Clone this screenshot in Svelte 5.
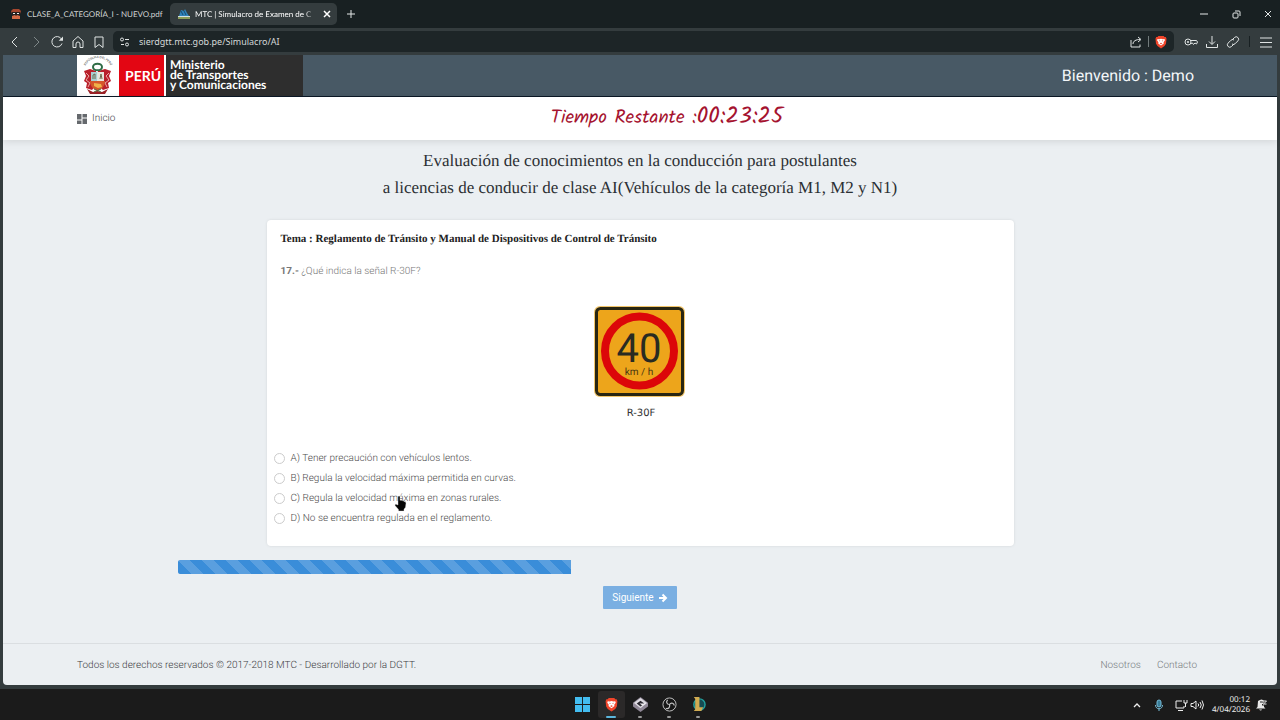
<script lang="ts">
	const options = [
		{ id: 'A', text: 'Tener precaución con vehículos lentos.' },
		{ id: 'B', text: 'Regula la velocidad máxima permitida en curvas.' },
		{ id: 'C', text: 'Regula la velocidad máxima en zonas rurales.' },
		{ id: 'D', text: 'No se encuentra regulada en el reglamento.' }
	];

	let selected = $state('');
	let url = $state('sierdgtt.mtc.gob.pe/Simulacro/AI');
	let current = 17;
	let total = 40;
	let progress = $derived((current / total) * 100);
</script>

{#snippet brave()}
	<svg viewBox="0 0 16 16">
		<path d="M5 1h6l1 1.400h1.500l.8 2-.6 5.600-1.700 2.700L8 15.500l-4-2.800L2.300 10l-.6-5.600.8-2H4z" fill="#f0452b" />
		<path d="M4 4.500l2 .3 2-.6 2 .6 2-.3.500 1.500-1.600 2.300.3 1.400L8 12 4.800 9.700l.3-1.400L3.500 6z" fill="#fff" />
		<path d="M5.200 6l2 .7-.7.8zM10.800 6l-2 .7.7.8zM6.500 9.500L8 8.800l1.500.7L8 10.600z" fill="#f0452b" />
	</svg>
{/snippet}

<div class="window">
	<div class="tabs">
		<div class="tab">
			<svg viewBox="0 0 12 12">
				<path d="M1 3l2-2h6l2 2-1 3H2z" fill="#a5472f" />
				<path d="M2 4h8v4H2z" fill="#26211f" />
				<path d="M3 5h2v1H3zM7 5h2v1H7z" fill="#eee" />
				<path d="M2 8l3-1 1 1 1-1 3 1v3H2z" fill="#d36a45" />
			</svg>
			<span>CLASE_A_CATEGORÍA_I - NUEVO.pdf</span>
		</div>
		<div class="tab active">
			<svg viewBox="0 0 12 12">
				<path d="M1 8L3 2l3 1 1-2 2 4 2 3z" fill="#2e82b8" />
				<path d="M3 3l2 4M6 3l2 4" stroke="#174a70" />
				<path d="M0 8h12v1H0z" fill="#d2dfe4" />
				<path d="M0 9h12v2H0z" fill="#8a9b58" />
			</svg>
			<span class="tab-title">MTC | Simulacro de Examen de C</span>
			<button aria-label="Cerrar pestaña">
				<svg viewBox="0 0 12 12" class="line"><path d="M3 3l6 6M9 3l-6 6" stroke-width="1.500" /></svg>
			</button>
		</div>
		<button aria-label="Nueva pestaña">
			<svg viewBox="0 0 12 12" class="line"><path d="M6 2v8M2 6h8" /></svg>
		</button>
		<div class="window-buttons">
			<button aria-label="Minimizar"><svg viewBox="0 0 12 12" class="line"><path d="M2 6h8" /></svg></button>
			<button aria-label="Restaurar">
				<svg viewBox="0 0 12 12" class="line"><rect x="3" y="5" width="5" height="5" rx="1" /><path d="M5 3h4q1 0 1 1v4" /></svg>
			</button>
			<button aria-label="Cerrar"><svg viewBox="0 0 12 12" class="line"><path d="M3 3l6 6M9 3l-6 6" /></svg></button>
		</div>
	</div>

	<div class="toolbar">
		<button aria-label="Atrás"><svg viewBox="0 0 14 14" class="line"><path d="M9 2L4 7l5 5" /></svg></button>
		<button aria-label="Adelante" class="dim"><svg viewBox="0 0 14 14" class="line"><path d="M5 2l5 5-5 5" /></svg></button>
		<button aria-label="Recargar">
			<svg viewBox="0 0 14 14" class="line"><path d="M12 8.500A5.200 5.200 0 1 1 11.500 4" /><path d="M13 1.500v4.300H8.700z" fill="currentColor" stroke="none" /></svg>
		</button>
		<button aria-label="Página principal">
			<svg viewBox="0 0 14 14" class="line"><path d="M2 6l5-4.500L12 6v6.500H9V9a2 2 0 0 0-4 0v3.500H2z" /></svg>
		</button>
		<button aria-label="Marcador"><svg viewBox="0 0 14 14" class="line"><path d="M3 2h8v10.500L7 9.500l-4 3z" /></svg></button>
		<div class="address">
			<svg viewBox="0 0 14 14" class="line"><circle cx="4" cy="4.500" r="1.500" /><path d="M7 4.500h4M3 9.500h3" /><circle cx="9" cy="9.500" r="1.500" /></svg>
			<input aria-label="Dirección" bind:value={url} />
			<button aria-label="Compartir">
				<svg viewBox="0 0 14 14" class="line"><path d="M2 5v7h9V9.500M4 9c0-3 3-4.500 7-4.500M9 2l3 2.500L9 7" /></svg>
			</button>
			<i></i>
			<button aria-label="Brave Shields">{@render brave()}</button>
		</div>
		<div class="tools">
			<button aria-label="Contraseñas">
				<svg viewBox="0 0 14 14" class="line"><circle cx="4" cy="7" r="3" /><circle cx="4" cy="7" r=".7" /><path d="M6.500 5.500h6l1 1.500-1 2-1.500-1-1.500 1.500-1-1.500-1.500.5" /></svg>
			</button>
			<button aria-label="Descargas">
				<svg viewBox="0 0 14 14" class="line"><path d="M7 1v8M4 6.500l3 3 3-3M1.500 9v3.500h11V9" /></svg>
			</button>
			<button aria-label="Copiar enlace">
				<svg viewBox="0 0 14 14" class="line"><path d="M6 5l2.500-2.500a2.400 2.400 0 0 1 3.400 3.400L9 8.800a2.400 2.400 0 0 1-3 .2M8 9l-2.500 2.500a2.400 2.400 0 0 1-3.400-3.400L5 5.200A2.400 2.400 0 0 1 8 5" /></svg>
			</button>
			<i></i>
			<button aria-label="Menú"><svg viewBox="0 0 14 14" class="line"><path d="M1 3h12M1 7.500h12M1 12h12" /></svg></button>
		</div>
	</div>

	<div class="page">
		<header>
			<div class="container">
				<a class="logo" href="#inicio">
					<svg viewBox="0 0 42 41">
						<defs><path id="arc" d="M7 17a14 14 0 0 1 28 0" /></defs>
						<text class="arc-text"><textPath href="#arc" startOffset="50%" text-anchor="middle">REPÚBLICA DEL PERÚ</textPath></text>
						<path d="M13 14l-6 2 2 5-2 5 3 2-1 5 6 2 4-5V16zM28 14l6 2-2 5 2 5-3 2 1 5-6 2-5-5V16z" fill="#b9202b" />
						<path d="M9 18l3 3-3 4 4 3-2 4M32 18l-3 3 3 4-4 3 2 4" stroke="#e9a9a4" fill="none" />
						<ellipse cx="20.500" cy="12" rx="4.500" ry="3.300" fill="#fff" stroke="#2e6b45" stroke-width="2" />
						<path d="M14 17h6.500v9H14z" fill="#a9cfd2" />
						<path d="M20.500 17H27v9h-6.500z" fill="#e7e6dc" />
						<path d="M16 24v-4l2-1v5M23 24l1-5 1 5" stroke="#6d6c4d" fill="none" />
						<path d="M13 26h15c0 5-3 8-7.500 10C16 34 13 31 13 26z" fill="#d5562b" />
						<path d="M17 28l7 1 1 3-4 1-4-2z" fill="#efb24a" />
						<path d="M10 34l6 3 4-1 5 1 6-3-3 5H13z" fill="#9c2026" />
						<path d="M17 34l7 3M24 34l-7 3" stroke="#557447" />
					</svg>
					<span class="peru">PERÚ</span>
					<span class="ministry">Ministerio<br />de Transportes<br />y Comunicaciones</span>
				</a>
				<span class="welcome">Bienvenido : Demo</span>
			</div>
		</header>

		<nav>
			<div class="container">
				<a class="home" href="#inicio">
					<svg viewBox="0 0 10 10"><path d="M0 0h4.500v5.500H0zM5.500 0H10v3.500H5.500zM0 6.500h4.500V10H0zM5.500 4.500H10V10H5.500z" fill="#65696d" /></svg>
					Inicio
				</a>
				<span class="timer">Tiempo Restante :<b>00:23:25</b></span>
			</div>
		</nav>

		<main>
			<h1>
				Evaluación de conocimientos en la conducción para postulantes<br />
				a licencias de conducir de clase AI(Vehículos de la categoría M1, M2 y N1)
			</h1>

			<section class="card">
				<h2>Tema : Reglamento de Tránsito y Manual de Dispositivos de Control de Tránsito</h2>
				<p class="question"><b>{current}.-</b> ¿Qué indica la señal R-30F?</p>

				<svg class="sign" viewBox="0 0 100 120" role="img" aria-label="Señal R-30F">
					<rect x="4" y="2" width="91" height="91" rx="6" fill="#f2c56a" />
					<rect x="6.500" y="4.500" width="86" height="86" rx="4" fill="#eda51b" stroke="#292612" stroke-width="3" />
					<circle cx="49.500" cy="47" r="34.500" fill="#eda51b" stroke="#dc0609" stroke-width="8" />
					<text x="49" y="58" font-size="40" fill="#292b22">40</text>
					<text x="49" y="71" font-size="10" fill="#4a3712">km / h</text>
					<text class="code" x="51" y="112" font-size="10" fill="#333">R-30F</text>
				</svg>

				<div class="options">
					{#each options as option}
						<label>
							<input type="radio" name="answer" value={option.id} bind:group={selected} />
							{option.id}) {option.text}
						</label>
					{/each}
					<svg class="pointer" viewBox="0 0 13 17">
						<path d="M4 1.500q1-1 2 0v4l1-.5 1 .8 1-.3 1 1 1.500.2.500 1.500-.5 4-1.500 2v1.800H4.500v-1.500L1 10.500l.5-1.500L4 10z" fill="#050505" stroke="#ddd" stroke-width=".4" />
					</svg>
				</div>
			</section>

			<div class="progress">
				<div class="bar" style="width: {progress}%"></div>
			</div>

			<button class="next">
				Siguiente
				<svg viewBox="0 0 10 10"><path d="M1 5h7M4.500 1.500L8 5 4.500 8.500" fill="none" stroke="#fff" stroke-width="2" /></svg>
			</button>
		</main>

		<footer>
			<div class="container">
				<span>Todos los derechos reservados © 2017-2018 MTC - Desarrollado por la DGTT.</span>
				<div class="links">
					<a href="#nosotros">Nosotros</a>
					<a href="#contacto">Contacto</a>
				</div>
			</div>
		</footer>
	</div>

	<div class="taskbar">
		<div class="apps">
			<button aria-label="Inicio de Windows">
				<svg viewBox="0 0 16 16"><path d="M0 0h7.500v7.500H0zM8.500 0H16v7.500H8.500zM0 8.500h7.500V16H0zM8.500 8.500H16V16H8.500z" fill="#43bdf0" /></svg>
			</button>
			<button aria-label="Brave" class="open current">{@render brave()}</button>
			<button aria-label="Editor" class="open">
				<svg viewBox="0 0 16 16"><path d="M8 0l8 6v4l-8 6-8-6V6z" fill="#8f8796" /><path d="M8 1l7 5.500L8 12 1 6.500z" fill="#dedbe2" /><path d="M4 7l4-3 4 3-4 3z" fill="#28252e" /><path d="M7 7h7l-4 2z" fill="#f3f1f5" /></svg>
			</button>
			<button aria-label="OBS Studio" class="open">
				<svg viewBox="0 0 16 16"><circle cx="8" cy="8" r="7" fill="#171717" stroke="#c5c5c5" /><path d="M8 8C5 8 4 5 6 3M8 8c2-3 5-1 5 1M8 8c1 3-1 5-4 4" stroke="#c5c5c5" stroke-width="1.300" fill="none" /></svg>
			</button>
			<button aria-label="League of Legends" class="open">
				<svg viewBox="0 0 16 16"><circle cx="9" cy="8" r="6" fill="#164c53" stroke="#23a2a0" stroke-width="1.500" /><path d="M3 0h6v11h4l-2 4H3l1.500-2V2z" fill="#d1ac52" /></svg>
			</button>
		</div>
		<div class="tray">
			<svg viewBox="0 0 14 14" class="line"><path d="M4 9l3-3 3 3" stroke-width="1.300" /></svg>
			<svg viewBox="0 0 14 14" class="line mic"><rect x="5" y="2" width="4" height="7" rx="2" fill="#397d99" /><path d="M3.500 7c0 5 7 5 7 0M7 11v2" /></svg>
			<div class="devices">
				<svg viewBox="0 0 14 14" class="line"><path d="M8 3H2v7h8V8M4 12.500h5M10 2v3h3V2M11.500 5v4" /></svg>
				<svg viewBox="0 0 14 14" class="line"><path d="M1 5.500h2L6 3v8L3 8.500H1zM8 5.500q1.500 1.500 0 3M10 4q2.500 3 0 6M12 2.500q3 4.500 0 9" /></svg>
			</div>
			<time>00:12<br />4/04/2026</time>
			<svg viewBox="0 0 14 14"><path d="M4 3q4-3 6 0v6l1.500 1.500H2L3.500 9zM5 11.500h3q-1 2-3 0z" fill="#e8e8e8" /><path d="M6 4h5L8 7h4" stroke="#222" fill="none" /><path d="M8.500 3h4L9.500 6h3" stroke="#e8e8e8" fill="none" /></svg>
		</div>
	</div>
</div>

<style>
	:global(body) {
		margin: 0;
	}

	.window {
		display: flex;
		flex-direction: column;
		min-height: 100vh;
		background-color: #343c3e;
		font-family: Roboto, 'Liberation Sans', sans-serif;
		font-size: 10px;
		text-rendering: geometricPrecision;
	}

	button {
		display: flex;
		align-items: center;
		padding: 0;
		background: none;
		border: none;
		color: inherit;
		cursor: pointer;
	}

	a {
		color: inherit;
		text-decoration: none;
	}

	svg {
		display: block;
		flex: none;
		width: 14px;
		height: 14px;
	}

	.line {
		fill: none;
		stroke: currentColor;
		stroke-width: 1;
	}

	/* browser chrome */
	.tabs {
		display: flex;
		align-items: center;
		gap: 8px;
		height: 28px;
		padding-right: 6px;
		background-color: #182022;
		color: #e4e8e8;
		font-family: Lato, sans-serif;
		font-size: 8px;
	}

	.tabs svg {
		width: 12px;
		height: 12px;
	}

	.tab {
		display: flex;
		flex: none;
		align-items: center;
		gap: 5px;
		box-sizing: border-box;
		width: 162px;
		padding-left: 10px;
		white-space: nowrap;
		color: #d0d4d4;
	}

	.tab.active {
		width: 167px;
		height: 22px;
		padding: 0 4px 0 8px;
		border-radius: 5px;
		background-color: #343c3e;
		color: #fff;
	}

	.tab-title {
		flex: 1;
		overflow: hidden;
		mask-image: linear-gradient(to right, #000 90%, transparent);
	}

	.window-buttons {
		display: flex;
		gap: 20px;
		margin-left: auto;
	}

	.toolbar {
		display: flex;
		align-items: center;
		gap: 7px;
		height: 27px;
		padding: 0 7px 0 8px;
		color: #e0e4e4;
	}

	.dim {
		color: #7f8889;
	}

	.address {
		display: flex;
		flex: 1;
		align-items: center;
		gap: 5px;
		height: 21px;
		padding: 0 6px 0 5px;
		border-radius: 5px;
		background-color: #1d2527;
	}

	.address input {
		flex: 1;
		padding: 0 0 0 2px;
		border: none;
		outline: none;
		background: none;
		color: #d5d9d9;
		font: 9px 'Noto Sans', sans-serif;
	}

	i {
		width: 1px;
		height: 11px;
		background-color: #727b7c;
	}

	.tools {
		display: flex;
		align-items: center;
		gap: 7px;
		margin-left: 3px;
	}

	.tools i {
		margin: 0 2px;
		background-color: #182022;
	}

	/* site */
	.page {
		display: flex;
		flex: 1;
		flex-direction: column;
		margin: 0 3px 4px;
		border-radius: 0 0 4px 4px;
		background-color: #ebeff2;
		color: #3c4043;
		font-weight: 300;
	}

	.container {
		display: flex;
		align-items: center;
		justify-content: space-between;
		box-sizing: border-box;
		width: 100%;
		max-width: 1126px;
		margin: 0 auto;
	}

	header {
		border-bottom: 1px solid #0b1826;
		background-color: #485965;
	}

	.logo {
		display: flex;
		height: 41px;
		background-color: #2e2e2e;
		color: #fff;
		font-family: Lato, sans-serif;
		font-weight: bold;
	}

	.logo svg {
		width: 42px;
		height: 41px;
		background-color: #fff;
	}

	.arc-text {
		font-size: 3px;
		font-weight: normal;
		fill: #333;
	}

	.peru {
		display: flex;
		align-items: center;
		padding: 0 3px 0 6px;
		border-right: 2px solid #fff;
		background-color: #e30613;
		font-size: 14px;
	}

	.ministry {
		width: 133px;
		padding: 5px 0 0 4px;
		font-size: 12px;
		line-height: 10px;
	}

	.welcome {
		padding-right: 9px;
		color: #f4f7f9;
		font-size: 16px;
		font-weight: normal;
	}

	nav {
		background-color: #fff;
		box-shadow: 0 1px 8px rgba(0, 0, 0, 0.12);
	}

	nav .container {
		display: grid;
		grid-template-columns: 1fr auto 1fr;
		height: 43px;
	}

	.home {
		display: flex;
		align-items: center;
		gap: 5px;
	}

	.home svg {
		width: 10px;
		height: 10px;
	}

	.timer {
		padding-left: 54px;
		color: #a5132f;
		font-family: Kalam, Merienda, cursive;
		font-size: 19px;
		font-weight: normal;
		line-height: 40px;
	}

	.timer b {
		font-size: 23px;
		font-weight: normal;
	}

	main {
		display: flex;
		flex: 1;
		flex-direction: column;
		align-items: center;
		padding-top: 7px;
	}

	h1 {
		margin: 0;
		color: #2b3034;
		font: 17px/27px 'Liberation Serif', serif;
		text-align: center;
	}

	.card {
		box-sizing: border-box;
		width: 100%;
		max-width: 747px;
		margin-top: 19px;
		padding: 12px 14px 18px;
		border-radius: 4px;
		background-color: #fff;
		box-shadow: 0 0 3px rgba(0, 0, 0, 0.1);
	}

	h2 {
		margin: 0;
		color: #222;
		font: bold 11px/14px 'Liberation Serif', serif;
	}

	.question {
		margin: 19px 0 0;
		color: #777;
		line-height: 14px;
	}

	.question b {
		font-weight: bold;
	}

	.sign {
		width: 100px;
		height: 120px;
		margin: 25px auto 24px;
	}

	.sign text {
		font-family: Roboto, sans-serif;
		font-weight: normal;
		text-anchor: middle;
	}

	.sign .code {
		font-family: 'DejaVu Sans', sans-serif;
	}

	.options {
		display: flex;
		position: relative;
		flex-direction: column;
		margin-left: -7px;
	}

	.options label {
		display: flex;
		align-items: center;
		gap: 6px;
		height: 20px;
		color: #4c4c4c;
	}

	.options input {
		appearance: none;
		box-sizing: border-box;
		width: 11px;
		height: 11px;
		margin: 0;
		border: 1px solid #ccc;
		border-radius: 50%;
	}

	.options input:checked {
		border: 3px solid #4292dc;
	}

	.pointer {
		position: absolute;
		top: 47px;
		left: 120px;
		width: 13px;
		height: 17px;
	}

	.progress {
		width: 100%;
		max-width: 925px;
		height: 14px;
		margin-top: 14px;
	}

	.bar {
		height: 100%;
		border-radius: 2px 0 0 2px;
		background-color: #3a8dd9;
		background-image: linear-gradient(
			45deg,
			rgba(255, 255, 255, 0.16) 25%,
			transparent 25%,
			transparent 50%,
			rgba(255, 255, 255, 0.16) 50%,
			rgba(255, 255, 255, 0.16) 75%,
			transparent 75%
		);
		background-size: 24px 24px;
	}

	.next {
		gap: 4px;
		height: 23px;
		margin-top: 12px;
		padding: 0 9px;
		border-radius: 1px;
		background-color: #7aafe2;
		color: #fff;
		font: 10px Roboto, sans-serif;
	}

	.next svg {
		width: 10px;
		height: 10px;
	}

	footer {
		border-top: 1px solid #dadee1;
	}

	footer .container {
		height: 41px;
		padding: 2px 6px 0 0;
	}

	.links {
		display: flex;
		gap: 16px;
		color: #777b7e;
	}

	/* desktop */
	.taskbar {
		display: grid;
		grid-template-columns: 1fr auto 1fr;
		align-items: center;
		height: 31px;
		background-color: #1b1b1b;
		color: #eee;
	}

	.apps {
		display: flex;
		grid-column: 2;
		gap: 2px;
	}

	.apps button {
		position: relative;
		justify-content: center;
		width: 27px;
		height: 27px;
		border-radius: 3px;
	}

	.apps svg {
		width: 15px;
		height: 15px;
	}

	.open::after {
		position: absolute;
		bottom: 0;
		width: 4px;
		height: 2px;
		border-radius: 1px;
		background-color: #999;
		content: '';
	}

	.current {
		background-color: #2b2929;
	}

	.current::after {
		width: 10px;
		background-color: #5bb6dc;
	}

	.tray {
		display: flex;
		align-items: center;
		justify-content: flex-end;
		gap: 8px;
		padding-right: 12px;
	}

	.tray time {
		margin-right: -4px;
	}

	.devices {
		display: flex;
		gap: 2px;
	}

	.mic {
		color: #77bdd8;
	}

	time {
		font: 8px/10px 'Noto Sans', sans-serif;
		text-align: right;
	}
</style>
